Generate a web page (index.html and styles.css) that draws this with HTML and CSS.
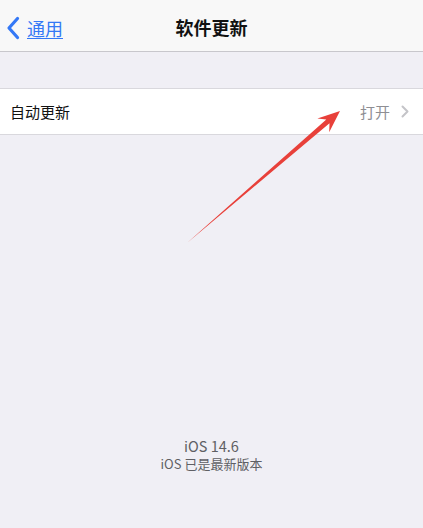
FILE: index.html
```html
<!DOCTYPE html>
<html lang="zh">
<head>
<meta charset="utf-8">
<link rel="stylesheet" href="styles.css">
</head>
<body>
<div class="screen">
  <header class="nav">
    <a class="back">
      <svg class="chev" width="14" height="24" viewBox="0 0 14 24"><path d="M11.5 2.5 L3 12 L11.5 21.5" fill="none" stroke="#3478f6" stroke-width="3.2" stroke-linecap="round" stroke-linejoin="round"/></svg>
      <span class="back-text">通用</span>
    </a>
    <h1 class="title">软件更新</h1>
  </header>
  <div class="group">
    <div class="cell">
      <span class="cell-label">自动更新</span>
      <span class="cell-value">打开</span>
      <svg class="disclosure" width="8" height="13" viewBox="0 0 8 13"><path d="M1.5 1.5 L6.5 6.5 L1.5 11.5" fill="none" stroke="#c4c4c8" stroke-width="2" stroke-linecap="round" stroke-linejoin="round"/></svg>
    </div>
  </div>
  <div class="footer">
    <div class="ver">iOS 14.6</div>
    <div class="ver-sub">iOS 已是最新版本</div>
  </div>
  <svg class="arrow" width="423" height="528" viewBox="0 0 423 528">
    <polygon points="187,243 329.5,123.3 329.2,132.2 340,111 317.4,118.6 326.3,119.5" fill="#e8403a"/>
  </svg>
</div>
</body>
</html>
```
FILE: styles.css
```css
html, body {
  margin: 0;
  padding: 0;
}
body {
  font-family: "Noto Sans CJK SC", "Noto Sans", sans-serif;
  background: #f0eff5;
}
.screen {
  position: relative;
  width: 423px;
  height: 528px;
  overflow: hidden;
  background: #f0eff5;
}
.nav {
  height: 52px;
  box-sizing: border-box;
  background: #f8f8f8;
  border-bottom: 1px solid #c8c7cc;
  display: flex;
  align-items: center;
  justify-content: center;
  position: relative;
}
.back {
  position: absolute;
  left: 6px;
  top: 16px;
  display: flex;
  align-items: center;
  gap: 7px;
}
.chev {
  display: block;
}
.back-text {
  color: #3478f6;
  font-size: 18px;
  text-decoration: underline;
  text-underline-offset: 2px;
  line-height: 24px;
}
.title {
  margin: 0;
  font-size: 18px;
  font-weight: 700;
  color: #111;
  line-height: 22px;
  margin-top: 3px;
}
.group {
  margin-top: 36px;
  background: #fff;
  border-top: 1px solid #d9d8dd;
  border-bottom: 1px solid #d9d8dd;
}
.cell {
  height: 45px;
  display: flex;
  align-items: center;
  padding: 0 14px 0 10px;
}
.cell-label {
  font-size: 15px;
  color: #111;
  flex: 1;
}
.cell-value {
  font-size: 15px;
  color: #8e8e93;
  margin-right: 11px;
}
.disclosure {
  display: block;
}
.footer {
  margin-top: 301px;
  text-align: center;
  color: #5f5f64;
}
.ver {
  font-size: 14.5px;
  line-height: 19px;
}
.ver-sub {
  font-size: 13px;
  line-height: 18px;
}
.arrow {
  position: absolute;
  left: 0;
  top: 0;
  pointer-events: none;
}
```
